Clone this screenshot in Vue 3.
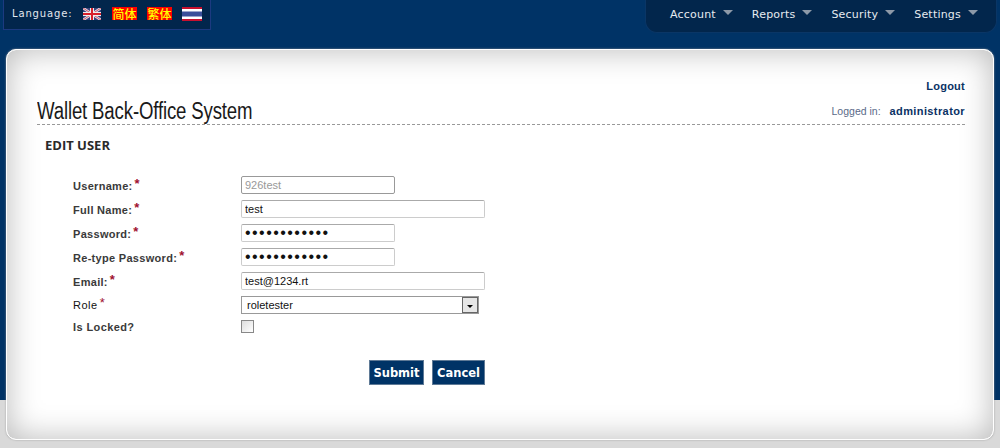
<template>
  <div class="page">
    <header class="topbar">
      <div class="lang">
        <span class="lang-label">Language:</span>
        <svg class="flag-uk" width="18" height="12" viewBox="0 0 18 12">
          <rect width="18" height="12" fill="#39427c" />
          <path d="M0 0L18 12M18 0L0 12" stroke="#e6dfe6" stroke-width="2.6" />
          <path d="M0 0L18 12M18 0L0 12" stroke="#c8324a" stroke-width="0.8" />
          <path d="M9 0V12M0 6H18" stroke="#eee" stroke-width="4" />
          <path d="M9 0V12M0 6H18" stroke="#d8202c" stroke-width="2" />
        </svg>
        <span class="flag-cn first">简体</span>
        <span class="flag-cn">繁体</span>
        <svg class="flag-th" width="20" height="14" viewBox="0 0 20 14">
          <rect width="20" height="14" fill="#fff" />
          <rect width="20" height="2" fill="#c8102e" />
          <rect y="12" width="20" height="2" fill="#c8102e" />
          <rect y="4.5" width="20" height="5" fill="#3a4f9a" />
        </svg>
      </div>
      <nav class="nav">
        <a v-for="m in menus" :key="m" class="nav-item">{{ m }}<i class="caret"></i></a>
      </nav>
    </header>

    <main class="panel">
      <div class="logout-row"><a class="logout">Logout</a></div>
      <div class="title-row">
        <h1>Wallet Back-Office System</h1>
        <div class="logged">Logged in: <b>administrator</b></div>
      </div>
      <h2>EDIT USER</h2>

      <form class="form" @submit.prevent>
        <div class="row" v-for="f in fields" :key="f.label">
          <label>{{ f.label }}<em>*</em></label>
          <input :class="['field', f.wide ? 'wide' : 'short', { off: f.disabled, pass: f.type === 'password' }]" :type="f.type || 'text'" :value="f.value" :disabled="f.disabled" />
        </div>
        <div class="row">
          <label class="plain">Role<em>*</em></label>
          <div class="select">
            <span>roletester</span>
            <i class="sel-btn"><b></b></i>
          </div>
        </div>
        <div class="row">
          <label class="locked">Is Locked?</label>
          <span class="check"></span>
        </div>
        <div class="actions">
          <button type="submit">Submit</button>
          <button type="button">Cancel</button>
        </div>
      </form>
    </main>
  </div>
</template>

<script setup>
const menus = ['Account', 'Reports', 'Security', 'Settings']
const fields = [
  { label: 'Username:', value: '926test', disabled: true },
  { label: 'Full Name:', value: 'test', wide: true },
  { label: 'Password:', value: '123456789012', type: 'password' },
  { label: 'Re-type Password:', value: '123456789012', type: 'password' },
  { label: 'Email:', value: 'test@1234.rt', wide: true }
]
</script>

<style>
html, body { margin: 0; padding: 0; }
body { overflow: hidden; }
</style>

<style scoped>
.page {
  height: 448px;
  box-sizing: border-box;
  background: linear-gradient(#003366 0, #003366 400px, #d9d9d9 400px);
  font-family: "Liberation Sans", Arial, sans-serif;
}
.topbar { display: flex; justify-content: space-between; align-items: flex-start; height: 33px; padding: 0 3px; }
.lang {
  display: flex; align-items: center; box-sizing: border-box;
  width: 208px; height: 30px; background: #02264c;
  border: 1px solid #1c3a80; border-top: 0; padding: 0 0 2px 8px;
}
.lang-label { font: 10px "DejaVu Sans", sans-serif; letter-spacing: .85px; color: #e4e8ee; width: 71px; }
.flag-cn {
  width: 25px; height: 13px; margin-left: 10px; background: #f00; color: #ff0;
  font: 500 12px/13px "Noto Sans CJK SC", sans-serif; text-align: center;
}
.flag-cn.first { margin-left: 11px; }
.flag-th { margin-left: 10px; }
.nav {
  display: flex; box-sizing: border-box; width: 352px; height: 33px; padding: 0 0 4px 24px;
  align-items: center; background: #02264c; border-radius: 0 0 12px 12px;
  border: 1px solid #0a3666; border-top: 0;
}
.nav-item { display: flex; align-items: center; font: 11px "DejaVu Sans", sans-serif; letter-spacing: .2px; color: #e6ebf0; margin-right: 19px; white-space: nowrap; }
.caret { width: 0; height: 0; margin: -3px 0 0 7px; border: 5px solid transparent; border-top: 5px solid #8d99a8; border-bottom: 0; }

.panel {
  box-sizing: border-box; width: 988px; height: 391px; margin: 16px 0 0 6px; padding: 30px 28px 0 30px;
  background: #fff; border-radius: 10px; border: 1px solid #fff;
  box-shadow: inset 0 0 32px #b8b8b8, 0 0 2px #999;
}
.logout-row { display: flex; justify-content: flex-end; height: 18px; }
.logout { font-size: 11px; font-weight: bold; letter-spacing: .25px; color: #0a3264; }
.title-row { display: flex; justify-content: space-between; align-items: flex-end; height: 26px; border-bottom: 1px dashed #999; }
h1 {
  margin: 0; font: normal 23px/26px "Liberation Sans", sans-serif;
  color: #1a1a1a; letter-spacing: -.2px; white-space: nowrap;
  transform: scaleX(.81); transform-origin: left center;
}
.logged { font-size: 10.5px; color: #5a6a88; line-height: 26px; }
.logged b { font-size: 11px; color: #0a3264; margin-left: 6px; letter-spacing: .4px; }
h2 { margin: 11px 0 0 8px; font: 700 13px/18px "Open Sans", sans-serif; color: #2a2a2a; }
.form { padding: 22px 0 0 36px; }
.row { display: flex; align-items: flex-start; height: 24px; }
.row label {
  width: 168px; flex: none; font-size: 11px; line-height: 20px; font-weight: bold;
  color: #3a3a3a; letter-spacing: .3px;
}
.row label em { font-style: normal; color: #a01030; font-size: 13px; margin-left: 2px; position: relative; top: -2px; }
.row label.plain { font-weight: normal; color: #111; letter-spacing: .5px; line-height: 18px; }
.row label.locked { line-height: 14px; letter-spacing: .4px; }
.field {
  box-sizing: border-box; height: 18px; padding: 0 3px; margin: 0;
  border: 1px solid #ccc; border-top-color: #aaa; border-radius: 2px; background: #fff;
  font: 11px "Liberation Sans", sans-serif; color: #111; outline: none;
}
.pass { font-size: 16px; letter-spacing: 1.45px; }
.short { width: 154px; }
.wide { width: 244px; }
.off { color: #999; border-color: #999; }
.select {
  position: relative; box-sizing: border-box; width: 238px; height: 18px;
  border: 1px solid #999; padding-left: 5px; background: #fff;
  font-size: 11px; line-height: 16px; color: #111;
}
.sel-btn {
  position: absolute; right: 0; top: 0; box-sizing: border-box; width: 16px; height: 16px;
  background: #e6e6e6; border: 1px solid #666; display: flex; align-items: center; justify-content: center;
}
.sel-btn b { width: 0; height: 0; border: 3px solid transparent; border-top: 3px solid #000; border-bottom: 0; margin-top: 2px; }
.check {
  box-sizing: border-box; width: 13px; height: 13px; border: 1px solid #888;
  background: linear-gradient(135deg, #ddd, #fff);
}
.actions { display: flex; justify-content: flex-end; gap: 8px; width: 412px; margin-top: 16px; }
button {
  box-sizing: border-box; height: 25px; padding: 0 3.5px; background: #003366;
  border: 1px solid #5f7a96; color: #fff; font: bold 11.5px "DejaVu Sans", sans-serif;
}
button:last-child { padding: 0 4px; }
</style>
